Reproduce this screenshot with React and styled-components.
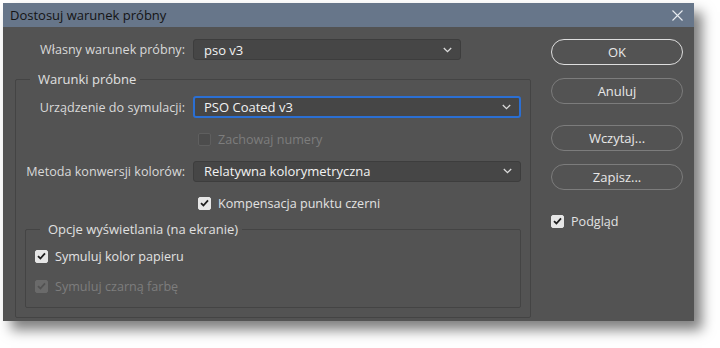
import React from 'react'
import styled, { createGlobalStyle } from 'styled-components'

const GlobalStyle = createGlobalStyle`
  html, body {
    margin: 0;
    padding: 0;
    background: #ffffff;
  }
  body {
    font-family: "Open Sans", "Noto Sans", sans-serif;
    font-size: 12.6px;
  }
`

const Page = styled.div`
  width: 720px;
  height: 348px;
  padding: 3px;
  box-sizing: border-box;
`

const Dialog = styled.div`
  width: 691px;
  height: 318px;
  background: #535353;
  box-shadow: 8px 9px 12px rgba(0, 0, 0, 0.5);
  display: flex;
  flex-direction: column;
`

const TitleBar = styled.div`
  height: 24px;
  flex: none;
  background: #67768a;
  display: flex;
  align-items: center;
  justify-content: space-between;
  padding: 0 11px 0 7px;
  color: #141414;
  font-size: 13px;
`

const CloseIcon = () => (
  <svg width="11" height="11" viewBox="0 0 11 11">
    <path d="M0.5 0.5 L10.5 10.5 M10.5 0.5 L0.5 10.5" stroke="#e8ecf0" strokeWidth="1.1" />
  </svg>
)

const Body = styled.div`
  flex: 1;
  display: flex;
  gap: 20px;
  padding: 12px 11px 0 12px;
`

const LeftColumn = styled.div`
  width: 516px;
  display: flex;
  flex-direction: column;
`

const RightColumn = styled.div`
  width: 132px;
  display: flex;
  flex-direction: column;
`

const Row = styled.div`
  display: flex;
  align-items: center;
  gap: 8px;
  height: ${({ $h }) => $h || 22}px;
`

const Label = styled.div`
  width: ${({ $w }) => $w}px;
  flex: none;
  text-align: right;
  color: #d9d9d9;
  white-space: nowrap;
`

const Select = styled.div`
  box-sizing: border-box;
  height: ${({ $focused }) => ($focused ? 22 : 21)}px;
  width: ${({ $w }) => ($w ? `${$w}px` : 'auto')};
  flex: ${({ $w }) => ($w ? 'none' : '1')};
  background: #464646;
  border: ${({ $focused }) => ($focused ? '2px solid #2b6fd3' : '1px solid #3d3d3d')};
  border-radius: 3px;
  display: flex;
  align-items: center;
  justify-content: space-between;
  padding: 0 8px 0 ${({ $focused }) => ($focused ? 9 : 10)}px;
  color: #f2f2f2;
  font-size: 13px;
`

const Chevron = () => (
  <svg width="9" height="6" viewBox="0 0 9 6">
    <path d="M0.8 1 L4.5 4.6 L8.2 1" fill="none" stroke="#dcdcdc" strokeWidth="1.3" />
  </svg>
)

const Group = styled.fieldset`
  margin: ${({ $top }) => $top}px 0 0 0;
  padding: 9px 9px ${({ $bottom }) => $bottom}px 9px;
  border: 1px solid #444444;
  border-radius: 2px;
  min-width: 0;
  display: flex;
  flex-direction: column;
  gap: ${({ $gap }) => $gap}px;
`

const Legend = styled.legend`
  margin-left: 5px;
  padding: 0 4px 0 8px;
  color: #e0e0e0;
  font-size: 13px;
  line-height: 16px;
`

const CheckRow = styled.label`
  display: flex;
  align-items: center;
  gap: 7px;
  height: 22px;
  margin-top: ${({ $top }) => $top || 0}px;
  padding-left: ${({ $indent }) => $indent || 0}px;
  color: ${({ $disabled }) => ($disabled ? '#7d7d7d' : '#e2e2e2')};
  white-space: nowrap;
`

const Box = styled.span`
  width: 13px;
  height: 13px;
  box-sizing: border-box;
  border-radius: 2px;
  display: flex;
  align-items: center;
  justify-content: center;
  background: ${({ $disabled, $checked }) =>
    $disabled ? ($checked ? '#6a6a6a' : '#4c4c4c') : '#e6e6e6'};
  border: 1px solid ${({ $disabled, $checked }) =>
    $disabled ? ($checked ? '#6a6a6a' : '#5f5f5f') : '#e6e6e6'};
`

const Checkbox = ({ checked, disabled, children, indent, top }) => (
  <CheckRow $disabled={disabled} $indent={indent} $top={top}>
    <Box $checked={checked} $disabled={disabled}>
      {checked && (
        <svg width="9" height="8" viewBox="0 0 9 8">
          <path
            d="M1 4.2 L3.4 6.5 L8 1.3"
            fill="none"
            stroke={disabled ? '#525252' : '#1e1e1e'}
            strokeWidth="1.8"
          />
        </svg>
      )}
    </Box>
    {children}
  </CheckRow>
)

const Button = styled.button`
  box-sizing: border-box;
  width: 132px;
  height: 26px;
  margin-top: ${({ $top }) => $top || 0}px;
  border-radius: 13px;
  background: transparent;
  border: ${({ $primary }) => ($primary ? '1.5px solid #dedede' : '1px solid #7c7c7c')};
  color: #e8e8e8;
  font-family: inherit;
  font-size: 13px;
  padding: 0;
`

export default function App() {
  return (
    <Page>
      <GlobalStyle />
      <Dialog>
        <TitleBar>
          <span>Dostosuj warunek próbny</span>
          <CloseIcon />
        </TitleBar>
        <Body>
          <LeftColumn>
            <Row $h={21}>
              <Label $w={170}>Własny warunek próbny:</Label>
              <Select $w={268}>
                pso v3
                <Chevron />
              </Select>
            </Row>
            <Group $top={11} $bottom={9} $gap={10}>
              <Legend>Warunki próbne</Legend>
              <Row>
                <Label $w={160}>Urządzenie do symulacji:</Label>
                <Select $focused>
                  PSO Coated v3
                  <Chevron />
                </Select>
              </Row>
              <Row>
                <Label $w={160} />
                <Checkbox disabled indent={5}>Zachowaj numery</Checkbox>
              </Row>
              <Row>
                <Label $w={160}>Metoda konwersji kolorów:</Label>
                <Select>
                  Relatywna kolorymetryczna
                  <Chevron />
                </Select>
              </Row>
              <Row>
                <Label $w={160} />
                <Checkbox checked indent={5}>Kompensacja punktu czerni</Checkbox>
              </Row>
              <Group $top={-3} $bottom={10} $gap={8}>
                <Legend>Opcje wyświetlania (na ekranie)</Legend>
                <Checkbox checked top={-1}>Symuluj kolor papieru</Checkbox>
                <Checkbox checked disabled>Symuluj czarną farbę</Checkbox>
              </Group>
            </Group>
          </LeftColumn>
          <RightColumn>
            <Button $primary>OK</Button>
            <Button $top={13}>Anuluj</Button>
            <Button $top={21}>Wczytaj...</Button>
            <Button $top={13}>Zapisz...</Button>
            <Checkbox checked top={20}>Podgląd</Checkbox>
          </RightColumn>
        </Body>
      </Dialog>
    </Page>
  )
}
